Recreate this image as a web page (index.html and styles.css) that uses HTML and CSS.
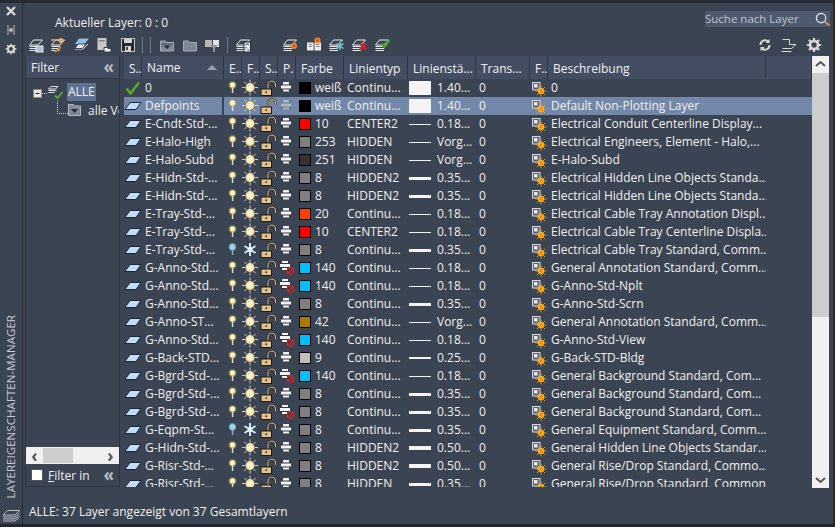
FILE: index.html
```html
<!DOCTYPE html>
<html lang="de">
<head>
<meta charset="utf-8">
<title>Layereigenschaften-Manager</title>
<link rel="stylesheet" href="styles.css">
</head>
<body>
<svg class="defs" aria-hidden="true">
  <symbol id="layer" viewBox="0 0 18 18"><path d="M6 5.500h11l-5 7H1z" fill="#c4dcf5" stroke="#16263f"/></symbol>
  <symbol id="check" viewBox="0 0 18 18"><path d="M2.500 9.500l4 5L15 3.500" fill="none" stroke="#5cab2e" stroke-width="2.400"/></symbol>
  <symbol id="bulb" viewBox="0 0 18 18"><circle cx="8.500" cy="6" r="4" fill="#b8a25a" opacity=".45"/><circle cx="8.500" cy="6" r="2.800" fill="#fff3b8"/><rect x="7.800" y="9" width="1.500" height="5" fill="#e4dcc0"/></symbol>
  <symbol id="bulboff" viewBox="0 0 18 18"><circle cx="8.500" cy="6" r="3.400" fill="#a4d4e6" stroke="#5f97ad"/><rect x="7.800" y="9" width="1.500" height="5" fill="#8fa7b5"/></symbol>
  <symbol id="sun" viewBox="0 0 18 18"><path d="M8 .5v16M0 8.500h16M2.400 2.900l11.200 11.200M13.600 2.900L2.400 14.100" stroke="#e2decd" stroke-width=".9"/><circle cx="8" cy="8.500" r="5" fill="#5a5d5c"/><circle cx="8" cy="8.500" r="4.400" fill="#f8e3a4"/><circle cx="8" cy="8.500" r="2.500" fill="#fff5d2"/></symbol>
  <symbol id="snow" viewBox="0 0 18 18"><path d="M8 2v13M2.500 5l11 7M13.500 5l-11 7" stroke="#cfe8f5" stroke-width="2"/><circle cx="8" cy="8.500" r="2.500" fill="#e6f5fb"/></symbol>
  <symbol id="lock" viewBox="0 0 18 18"><path d="M8 10V6a3.500 3.500 0 0 1 7.500-.500V8" fill="none" stroke="#15181c" stroke-width="2.200"/><path d="M8 10V6a3.500 3.500 0 0 1 7.500-.500V8" fill="none" stroke="#ecc98a" stroke-width="1.100"/><rect x="1" y="10" width="10.500" height="6.500" fill="#e6c180" stroke="#15181c"/><rect x="5.500" y="12.500" width="1.500" height="1.500" fill="#15181c"/></symbol>
  <symbol id="print" viewBox="0 0 18 18"><rect x="3" y="3" width="10" height="10" rx="2" fill="#262b33" opacity=".4"/><rect x="5" y="3" width="6" height="2.500" fill="#f4f4f4"/><rect x="3" y="6.500" width="10" height="3" fill="#f4f4f4"/><rect x="5" y="10.500" width="6" height="2" fill="#f4f4f4"/></symbol>
  <symbol id="noprint" viewBox="0 0 18 18"><rect x="2" y="2" width="10" height="10" rx="2" fill="#262b33" opacity=".4"/><rect x="4" y="2" width="6" height="2" fill="#f4f4f4"/><rect x="2" y="5" width="10" height="3" fill="#f4f4f4"/><rect x="4" y="9" width="5" height="2" fill="#f4f4f4"/><circle cx="12.500" cy="12" r="3.200" fill="none" stroke="#d8231f" stroke-width="1.300"/><path d="M10.300 14.300l4.500-4.600" stroke="#d8231f" stroke-width="1.100"/></symbol>
  <symbol id="vp" viewBox="0 0 18 18"><rect x="2.500" y="3.500" width="7.500" height="7.500" fill="#59626f" stroke="#d8d8d8"/><rect x="4" y="5" width="3.500" height="3.500" fill="#e8e8e8"/><path d="M11 6.500v11M5.500 12h11M7 8l8 8M15 8l-8 8" stroke="#f7a81b" stroke-width=".9"/><circle cx="11" cy="12" r="3" fill="#ffb820"/><circle cx="11" cy="12" r="1.400" fill="#f3731a"/></symbol>
  <symbol id="stack" viewBox="0 0 16 16"><path d="M5.500 3h9L10 8H1.500zM1.500 9.500h8.500M1.500 11.500h8.500M1.500 13.500h8.500" fill="none" stroke="#e8e8e8"/></symbol>
  <symbol id="stripstack" viewBox="0 0 18 12"><path d="M5.500.5h12L13 5H1zM1 7h12l4.500-4M1 9h12l4.500-4M1 11h12l4.500-4" fill="none" stroke="#c8ccd2" stroke-width=".9"/></symbol>
  <symbol id="gear" viewBox="0 0 18 18"><circle cx="9" cy="9" r="4.500" fill="none" stroke="#d8d8d8" stroke-width="3"/><path d="M9 1v16M1 9h16M3.300 3.300l11.400 11.400M14.700 3.300L3.300 14.700" stroke="#d8d8d8" stroke-width="2.500" stroke-dasharray="3.500 9.200"/></symbol>
  <symbol id="folder" viewBox="0 0 16 16"><path d="M1.500 4h5l1 1.500h7V14h-13z" fill="#7d8796" stroke="#a6acb5"/><path d="M2 6.500h12V8H2z" fill="#5b6575"/><path d="M4.500 8.500h7L8 12z" fill="#262b33"/></symbol>
</svg>
<div class="window">
  <aside class="strip">
    <div class="strip-top">
      <svg class="s-ic" viewBox="0 0 12 12"><path d="M2 2l8 8M10 2l-8 8" stroke="#d8d8d8" stroke-width="2.400"/></svg>
      <svg class="s-ic" viewBox="0 0 12 12"><path d="M3 1v10M9 1v10" stroke="#b8b8b8"/><path d="M3.500 6L6 3.500v5zM8.500 6L6 3.500v5z" fill="#b8b8b8"/></svg>
      <svg class="s-ic"><use href="#gear"/></svg>
    </div>
    <div class="strip-title">LAYEREIGENSCHAFTEN-MANAGER</div>
    <svg class="s-stack"><use href="#stripstack"/></svg>
  </aside>
  <main class="panel">
    <header class="top">
      <div class="current">Aktueller Layer: 0 : 0</div>
      <div class="search"><span>Suche nach Layer</span>
        <svg class="mag" viewBox="0 0 16 16"><circle cx="6.500" cy="6.500" r="5" fill="none" stroke="#e8e8e8" stroke-width="1.300"/><path d="M10.500 10.500l5 4" stroke="#cf9a52" stroke-width="2"/></svg>
      </div>
    </header>
    <div class="toolbar">
      <div class="tools">
        <svg class="t"><use href="#stack"/><rect x="8" y="9" width="7" height="6" fill="#a9c0d6" stroke="#e8e8e8"/></svg>
        <svg class="t"><use href="#stack"/><circle cx="11" cy="3.500" r="2.500" fill="#d9b26a"/><path d="M1 3h9" stroke="#d9b26a" stroke-width="1.500"/><path d="M5 15l6-5" stroke="#c9822c" stroke-width="2"/></svg>
        <svg class="t m2" viewBox="0 0 16 16"><path d="M5 1.500h10L10.500 7H1z" fill="#8fbfe6"/><path d="M1 12h8l5-5" fill="none" stroke="#e8e8e8"/><path d="M4 7h8l-3.500 4.500H1z" fill="#f0f0f0" stroke="#39424f"/></svg>
        <svg class="t" viewBox="0 0 16 16"><rect x="1.500" y="1" width="9" height="12" fill="#c8c8c8"/><rect x="3" y="3" width="6" height="1.500" fill="#7d8796"/><path d="M8 10.500h3l1 1h3V15H8z" fill="#eee" stroke="#39424f"/></svg>
        <svg class="t m2" viewBox="0 0 16 16"><rect x="1.500" y="1.500" width="13" height="13" fill="#262b33" stroke="#c4c4c4"/><rect x="4" y="2" width="8" height="4" fill="#d0d0d0"/><rect x="5" y="9" width="6" height="5" fill="#d8d8d8"/><rect x="6" y="10" width="2" height="3" fill="#39424f"/></svg>
        <i class="sep"></i><i class="sep m1"></i>
        <svg class="t m2"><use href="#folder"/></svg>
        <svg class="t m1" viewBox="0 0 16 16"><path d="M1.500 4h5l1 1.500h7V14h-13z" fill="#7d8796" stroke="#a6acb5"/></svg>
        <svg class="t" viewBox="0 0 16 16"><rect x="1" y="3" width="7" height="7" fill="#b8b8b8"/><rect x="9" y="3" width="6" height="7" fill="#e0e0e0"/><path d="M6 8h8l-3 3v4h-2v-4z" fill="#8e949c"/></svg>
        <i class="sep m1"></i>
        <svg class="t m1"><use href="#stack"/><rect x="9" y="5" width="6.500" height="10" fill="#f0f0f0" stroke="#262b33"/><rect x="10.500" y="6.500" width="3.500" height="1.500" fill="#3d7fc4"/><rect x="10.500" y="10" width="1.500" height="1.500" fill="#3d7fc4"/><rect x="12.500" y="12" width="1.500" height="1.500" fill="#3d7fc4"/></svg>
        <span class="tool-gap"></span>
        <svg class="t"><use href="#stack"/><circle cx="12" cy="9" r="3" fill="#f3881c"/><circle cx="12" cy="9" r="1.300" fill="#e63a1e"/></svg>
        <svg class="t m2" viewBox="0 0 16 16"><path d="M1 5.500h6.500v8H1zM8.500 5.500H15v8H8.500z" fill="#f0f0f0"/><path d="M2.500 7.500h3.500M2.500 9.500h3.500M10 7.500h3.500M10 9.500h3.500" stroke="#7d8796"/><circle cx="11.500" cy="3.500" r="3" fill="#f3881c"/><circle cx="11.500" cy="3.500" r="1.300" fill="#e63a1e"/></svg>
        <svg class="t"><use href="#stack"/><path d="M12 5v8M8.500 6.500l7 5M15.500 6.500l-7 5" stroke="#7cc0dc" stroke-width="1.500"/></svg>
        <svg class="t m1"><use href="#stack"/><path d="M9 6.500l6 6M15 6.500l-6 6" stroke="#e2202a" stroke-width="2.300"/></svg>
        <svg class="t m1"><use href="#stack"/><path d="M7.500 7l3 3 5-7" fill="none" stroke="#3faa1e" stroke-width="2.400"/></svg>
      </div>
      <div class="tools-right">
        <svg class="tr" viewBox="0 0 14 14"><path d="M2.500 7a4.500 4.500 0 0 1 8-3M11.500 7a4.500 4.500 0 0 1-8 3" fill="none" stroke="#d8d8d8" stroke-width="2"/><path d="M11.500 1v4h-4zM2.500 13V9h4z" fill="#d8d8d8"/></svg>
        <svg class="tr2" viewBox="0 0 16 14"><path d="M1.500 1.500h7v5h6.500l-4.500 4h-9" fill="none" stroke="#d8d8d8"/><path d="M.5 13.500h10" stroke="#d8d8d8"/></svg>
        <svg class="tr2"><use href="#gear"/></svg>
      </div>
    </div>
    <div class="content">
      <section class="filter">
        <div class="filter-head"><span>Filter</span><span class="chev">«</span></div>
        <div class="tree">
          <div class="node">
            <svg class="tree-ic" viewBox="0 0 34 18"><rect x=".5" y="6.500" width="8" height="8" fill="#e6e6e6" stroke="#8a8a8a"/><path d="M2.500 10.500h4" stroke="#222"/><path d="M9 10.500h6" stroke="#d0d0d0" stroke-dasharray="1 1"/><path d="M18 3.500h7l-2.500 2.500H15.500zM15.500 7.500h8M15.500 9.500h6" fill="none" stroke="#e4e4e4"/><path d="M22 12.500l2.500 2.500 5-6" fill="none" stroke="#5cab2e" stroke-width="1.800"/></svg>
            <span class="all">ALLE</span>
          </div>
          <div class="node node-sub">
            <svg class="sub-ic" viewBox="0 0 32 18"><path d="M1.500 0v12.500H12" fill="none" stroke="#d0d0d0" stroke-dasharray="1 1"/><path d="M12.500 3.500h5l1 1.500h6v9.500h-12z" fill="#7d8796" stroke="#b4b9c0"/><path d="M15 8h7l-3.500 4z" fill="#262b33"/></svg>
            <span>alle Ve</span>
          </div>
        </div>
        <div class="hbar"><span class="arrow">‹</span><span class="hthumb"></span><span class="arrow arrow-r">›</span></div>
        <div class="filter-foot"><label class="inv"><i class="box"></i><span><u>F</u>ilter in</span></label><span class="chev">«</span></div>
      </section>
      <section class="table">
        <div class="list">
          <div class="row head">
            <div>S..</div><div class="namehead">Name<i class="sort"></i></div><div>E..</div><div>F..</div><div>S..</div><div>P.</div><div>Farbe</div><div>Linientyp</div><div>Linienstä...</div><div>Trans...</div><div>F..</div><div>Beschreibung</div><div></div>
          </div>
          <div class="rows">
            <div class="row"><div class="ic"><svg><use href="#check"/></svg></div><div class="nm">0</div><div class="ic"><svg><use href="#bulb"/></svg></div><div class="ic"><svg><use href="#sun"/></svg></div><div class="ic"><svg><use href="#lock"/></svg></div><div class="ic"><svg><use href="#print"/></svg></div><div class="col"><i class="sw c-k"></i>weiß</div><div class="tx">Continu...</div><div class="lw"><i class="ln w-fat"></i>1.40...</div><div class="tx">0</div><div class="ic"><svg><use href="#vp"/></svg></div><div class="tx">0</div><div></div></div>
            <div class="row sel"><div class="ic"><svg><use href="#layer"/></svg></div><div class="nm">Defpoints</div><div class="ic"><svg><use href="#bulb"/></svg></div><div class="ic"><svg><use href="#sun"/></svg></div><div class="ic"><svg><use href="#lock"/></svg></div><div class="ic dim"><svg><use href="#print"/></svg></div><div class="col"><i class="sw c-k"></i>weiß</div><div class="tx">Continu...</div><div class="lw"><i class="ln w-fat"></i>1.40...</div><div class="tx">0</div><div class="ic"><svg><use href="#vp"/></svg></div><div class="tx">Default Non-Plotting Layer</div><div></div></div>
            <div class="row"><div class="ic"><svg><use href="#layer"/></svg></div><div class="nm">E-Cndt-Std-...</div><div class="ic"><svg><use href="#bulb"/></svg></div><div class="ic"><svg><use href="#sun"/></svg></div><div class="ic"><svg><use href="#lock"/></svg></div><div class="ic"><svg><use href="#print"/></svg></div><div class="col"><i class="sw c-r"></i>10</div><div class="tx">CENTER2</div><div class="lw"><i class="ln w1"></i>0.18...</div><div class="tx">0</div><div class="ic"><svg><use href="#vp"/></svg></div><div class="tx">Electrical Conduit Centerline Display...</div><div></div></div>
            <div class="row"><div class="ic"><svg><use href="#layer"/></svg></div><div class="nm">E-Halo-High</div><div class="ic"><svg><use href="#bulb"/></svg></div><div class="ic"><svg><use href="#sun"/></svg></div><div class="ic"><svg><use href="#lock"/></svg></div><div class="ic"><svg><use href="#print"/></svg></div><div class="col"><i class="sw c-253"></i>253</div><div class="tx">HIDDEN</div><div class="lw"><i class="ln w1"></i>Vorg...</div><div class="tx">0</div><div class="ic"><svg><use href="#vp"/></svg></div><div class="tx">Electrical Engineers, Element - Halo,...</div><div></div></div>
            <div class="row"><div class="ic"><svg><use href="#layer"/></svg></div><div class="nm">E-Halo-Subd</div><div class="ic"><svg><use href="#bulb"/></svg></div><div class="ic"><svg><use href="#sun"/></svg></div><div class="ic"><svg><use href="#lock"/></svg></div><div class="ic"><svg><use href="#print"/></svg></div><div class="col"><i class="sw c-251"></i>251</div><div class="tx">HIDDEN</div><div class="lw"><i class="ln w1"></i>Vorg...</div><div class="tx">0</div><div class="ic"><svg><use href="#vp"/></svg></div><div class="tx">E-Halo-Subd</div><div></div></div>
            <div class="row"><div class="ic"><svg><use href="#layer"/></svg></div><div class="nm">E-Hidn-Std-...</div><div class="ic"><svg><use href="#bulb"/></svg></div><div class="ic"><svg><use href="#sun"/></svg></div><div class="ic"><svg><use href="#lock"/></svg></div><div class="ic"><svg><use href="#print"/></svg></div><div class="col"><i class="sw c-8"></i>8</div><div class="tx">HIDDEN2</div><div class="lw"><i class="ln w2"></i>0.35...</div><div class="tx">0</div><div class="ic"><svg><use href="#vp"/></svg></div><div class="tx">Electrical Hidden Line Objects Standa...</div><div></div></div>
            <div class="row"><div class="ic"><svg><use href="#layer"/></svg></div><div class="nm">E-Hidn-Std-...</div><div class="ic"><svg><use href="#bulb"/></svg></div><div class="ic"><svg><use href="#sun"/></svg></div><div class="ic"><svg><use href="#lock"/></svg></div><div class="ic"><svg><use href="#print"/></svg></div><div class="col"><i class="sw c-8"></i>8</div><div class="tx">HIDDEN2</div><div class="lw"><i class="ln w2"></i>0.35...</div><div class="tx">0</div><div class="ic"><svg><use href="#vp"/></svg></div><div class="tx">Electrical Hidden Line Objects Standa...</div><div></div></div>
            <div class="row"><div class="ic"><svg><use href="#layer"/></svg></div><div class="nm">E-Tray-Std-...</div><div class="ic"><svg><use href="#bulb"/></svg></div><div class="ic"><svg><use href="#sun"/></svg></div><div class="ic"><svg><use href="#lock"/></svg></div><div class="ic"><svg><use href="#print"/></svg></div><div class="col"><i class="sw c-20"></i>20</div><div class="tx">Continu...</div><div class="lw"><i class="ln w1"></i>0.18...</div><div class="tx">0</div><div class="ic"><svg><use href="#vp"/></svg></div><div class="tx">Electrical Cable Tray Annotation Displ...</div><div></div></div>
            <div class="row"><div class="ic"><svg><use href="#layer"/></svg></div><div class="nm">E-Tray-Std-...</div><div class="ic"><svg><use href="#bulb"/></svg></div><div class="ic"><svg><use href="#sun"/></svg></div><div class="ic"><svg><use href="#lock"/></svg></div><div class="ic"><svg><use href="#print"/></svg></div><div class="col"><i class="sw c-r"></i>10</div><div class="tx">CENTER2</div><div class="lw"><i class="ln w1"></i>0.18...</div><div class="tx">0</div><div class="ic"><svg><use href="#vp"/></svg></div><div class="tx">Electrical Cable Tray Centerline Displa...</div><div></div></div>
            <div class="row"><div class="ic"><svg><use href="#layer"/></svg></div><div class="nm">E-Tray-Std-...</div><div class="ic"><svg><use href="#bulboff"/></svg></div><div class="ic"><svg><use href="#snow"/></svg></div><div class="ic"><svg><use href="#lock"/></svg></div><div class="ic"><svg><use href="#print"/></svg></div><div class="col"><i class="sw c-8"></i>8</div><div class="tx">Continu...</div><div class="lw"><i class="ln w2"></i>0.35...</div><div class="tx">0</div><div class="ic"><svg><use href="#vp"/></svg></div><div class="tx">Electrical Cable Tray Standard, Comm...</div><div></div></div>
            <div class="row"><div class="ic"><svg><use href="#layer"/></svg></div><div class="nm">G-Anno-Std...</div><div class="ic"><svg><use href="#bulb"/></svg></div><div class="ic"><svg><use href="#sun"/></svg></div><div class="ic"><svg><use href="#lock"/></svg></div><div class="ic"><svg><use href="#noprint"/></svg></div><div class="col"><i class="sw c-140"></i>140</div><div class="tx">Continu...</div><div class="lw"><i class="ln w1"></i>0.18...</div><div class="tx">0</div><div class="ic"><svg><use href="#vp"/></svg></div><div class="tx">General Annotation Standard, Comm...</div><div></div></div>
            <div class="row"><div class="ic"><svg><use href="#layer"/></svg></div><div class="nm">G-Anno-Std...</div><div class="ic"><svg><use href="#bulb"/></svg></div><div class="ic"><svg><use href="#sun"/></svg></div><div class="ic"><svg><use href="#lock"/></svg></div><div class="ic"><svg><use href="#noprint"/></svg></div><div class="col"><i class="sw c-140"></i>140</div><div class="tx">Continu...</div><div class="lw"><i class="ln w1"></i>0.18...</div><div class="tx">0</div><div class="ic"><svg><use href="#vp"/></svg></div><div class="tx">G-Anno-Std-Nplt</div><div></div></div>
            <div class="row"><div class="ic"><svg><use href="#layer"/></svg></div><div class="nm">G-Anno-Std...</div><div class="ic"><svg><use href="#bulb"/></svg></div><div class="ic"><svg><use href="#sun"/></svg></div><div class="ic"><svg><use href="#lock"/></svg></div><div class="ic"><svg><use href="#print"/></svg></div><div class="col"><i class="sw c-8"></i>8</div><div class="tx">Continu...</div><div class="lw"><i class="ln w2"></i>0.35...</div><div class="tx">0</div><div class="ic"><svg><use href="#vp"/></svg></div><div class="tx">G-Anno-Std-Scrn</div><div></div></div>
            <div class="row"><div class="ic"><svg><use href="#layer"/></svg></div><div class="nm">G-Anno-ST...</div><div class="ic"><svg><use href="#bulb"/></svg></div><div class="ic"><svg><use href="#sun"/></svg></div><div class="ic"><svg><use href="#lock"/></svg></div><div class="ic"><svg><use href="#print"/></svg></div><div class="col"><i class="sw c-42"></i>42</div><div class="tx">Continu...</div><div class="lw"><i class="ln w1"></i>Vorg...</div><div class="tx">0</div><div class="ic"><svg><use href="#vp"/></svg></div><div class="tx">General Annotation Standard, Comm...</div><div></div></div>
            <div class="row"><div class="ic"><svg><use href="#layer"/></svg></div><div class="nm">G-Anno-Std...</div><div class="ic"><svg><use href="#bulb"/></svg></div><div class="ic"><svg><use href="#sun"/></svg></div><div class="ic"><svg><use href="#lock"/></svg></div><div class="ic"><svg><use href="#noprint"/></svg></div><div class="col"><i class="sw c-140"></i>140</div><div class="tx">Continu...</div><div class="lw"><i class="ln w1"></i>0.18...</div><div class="tx">0</div><div class="ic"><svg><use href="#vp"/></svg></div><div class="tx">G-Anno-Std-View</div><div></div></div>
            <div class="row"><div class="ic"><svg><use href="#layer"/></svg></div><div class="nm">G-Back-STD...</div><div class="ic"><svg><use href="#bulb"/></svg></div><div class="ic"><svg><use href="#sun"/></svg></div><div class="ic"><svg><use href="#lock"/></svg></div><div class="ic"><svg><use href="#print"/></svg></div><div class="col"><i class="sw c-9"></i>9</div><div class="tx">Continu...</div><div class="lw"><i class="ln w15"></i>0.25...</div><div class="tx">0</div><div class="ic"><svg><use href="#vp"/></svg></div><div class="tx">G-Back-STD-Bldg</div><div></div></div>
            <div class="row"><div class="ic"><svg><use href="#layer"/></svg></div><div class="nm">G-Bgrd-Std-...</div><div class="ic"><svg><use href="#bulb"/></svg></div><div class="ic"><svg><use href="#sun"/></svg></div><div class="ic"><svg><use href="#lock"/></svg></div><div class="ic"><svg><use href="#noprint"/></svg></div><div class="col"><i class="sw c-140"></i>140</div><div class="tx">Continu...</div><div class="lw"><i class="ln w1"></i>0.18...</div><div class="tx">0</div><div class="ic"><svg><use href="#vp"/></svg></div><div class="tx">General Background Standard, Com...</div><div></div></div>
            <div class="row"><div class="ic"><svg><use href="#layer"/></svg></div><div class="nm">G-Bgrd-Std-...</div><div class="ic"><svg><use href="#bulb"/></svg></div><div class="ic"><svg><use href="#sun"/></svg></div><div class="ic"><svg><use href="#lock"/></svg></div><div class="ic"><svg><use href="#print"/></svg></div><div class="col"><i class="sw c-8"></i>8</div><div class="tx">Continu...</div><div class="lw"><i class="ln w2"></i>0.35...</div><div class="tx">0</div><div class="ic"><svg><use href="#vp"/></svg></div><div class="tx">General Background Standard, Com...</div><div></div></div>
            <div class="row"><div class="ic"><svg><use href="#layer"/></svg></div><div class="nm">G-Bgrd-Std-...</div><div class="ic"><svg><use href="#bulb"/></svg></div><div class="ic"><svg><use href="#sun"/></svg></div><div class="ic"><svg><use href="#lock"/></svg></div><div class="ic"><svg><use href="#noprint"/></svg></div><div class="col"><i class="sw c-8"></i>8</div><div class="tx">Continu...</div><div class="lw"><i class="ln w2"></i>0.35...</div><div class="tx">0</div><div class="ic"><svg><use href="#vp"/></svg></div><div class="tx">General Background Standard, Com...</div><div></div></div>
            <div class="row"><div class="ic"><svg><use href="#layer"/></svg></div><div class="nm">G-Eqpm-St...</div><div class="ic"><svg><use href="#bulboff"/></svg></div><div class="ic"><svg><use href="#snow"/></svg></div><div class="ic"><svg><use href="#lock"/></svg></div><div class="ic"><svg><use href="#print"/></svg></div><div class="col"><i class="sw c-8"></i>8</div><div class="tx">Continu...</div><div class="lw"><i class="ln w2"></i>0.35...</div><div class="tx">0</div><div class="ic"><svg><use href="#vp"/></svg></div><div class="tx">General Equipment Standard, Comm...</div><div></div></div>
            <div class="row"><div class="ic"><svg><use href="#layer"/></svg></div><div class="nm">G-Hidn-Std-...</div><div class="ic"><svg><use href="#bulb"/></svg></div><div class="ic"><svg><use href="#sun"/></svg></div><div class="ic"><svg><use href="#lock"/></svg></div><div class="ic"><svg><use href="#print"/></svg></div><div class="col"><i class="sw c-8"></i>8</div><div class="tx">HIDDEN2</div><div class="lw"><i class="ln w3"></i>0.50...</div><div class="tx">0</div><div class="ic"><svg><use href="#vp"/></svg></div><div class="tx">General Hidden Line Objects Standar...</div><div></div></div>
            <div class="row"><div class="ic"><svg><use href="#layer"/></svg></div><div class="nm">G-Risr-Std-...</div><div class="ic"><svg><use href="#bulb"/></svg></div><div class="ic"><svg><use href="#sun"/></svg></div><div class="ic"><svg><use href="#lock"/></svg></div><div class="ic"><svg><use href="#print"/></svg></div><div class="col"><i class="sw c-8"></i>8</div><div class="tx">HIDDEN2</div><div class="lw"><i class="ln w3"></i>0.50...</div><div class="tx">0</div><div class="ic"><svg><use href="#vp"/></svg></div><div class="tx">General Rise/Drop Standard, Commo...</div><div></div></div>
            <div class="row"><div class="ic"><svg><use href="#layer"/></svg></div><div class="nm">G-Risr-Std-...</div><div class="ic"><svg><use href="#bulb"/></svg></div><div class="ic"><svg><use href="#sun"/></svg></div><div class="ic"><svg><use href="#lock"/></svg></div><div class="ic"><svg><use href="#print"/></svg></div><div class="col"><i class="sw c-8"></i>8</div><div class="tx">HIDDEN</div><div class="lw"><i class="ln w2"></i>0.35...</div><div class="tx">0</div><div class="ic"><svg><use href="#vp"/></svg></div><div class="tx">General Rise/Drop Standard, Common</div><div></div></div>
          </div>
        </div>
        <div class="vbar">
          <svg class="vbtn" viewBox="0 0 17 17"><path d="M4 10l4.500-4 4.500 4" fill="none" stroke="#555" stroke-width="2"/></svg>
          <div class="vthumb"></div>
          <div class="vtrack"></div>
          <svg class="vbtn" viewBox="0 0 17 17"><path d="M4 7l4.500 4 4.500-4" fill="none" stroke="#555" stroke-width="2"/></svg>
        </div>
      </section>
    </div>
    <footer class="status">ALLE: 37 Layer angezeigt von 37 Gesamtlayern</footer>
  </main>
</div>
</body>
</html>
```

FILE: styles.css
```css
html, body { margin: 0; padding: 0; background: #23282f; }
body { width: 835px; height: 527px; overflow: hidden; font-family: "Open Sans", "Noto Sans", sans-serif; font-size: 12px; color: #f0f0f0; }
.defs { position: absolute; width: 0; height: 0; }
.window { display: flex; width: 833px; height: 524px; box-sizing: border-box; padding-top: 3px; background: #262b33; }
.strip { width: 22px; flex: none; display: flex; flex-direction: column; align-items: center; background: #3b4453; }
.strip-top { display: flex; flex-direction: column; align-items: center; gap: 7px; padding-top: 2px; }
.s-ic { width: 12px; height: 12px; }
.strip-title { margin-top: auto; writing-mode: vertical-rl; transform: rotate(180deg); font-size: 11.600px; color: #c8ccd2; line-height: 14px; white-space: nowrap; }
.s-stack { width: 18px; height: 12px; margin: 12px 0 2px; flex: none; }
.panel { flex: 1; margin-left: 1px; min-width: 0; display: flex; flex-direction: column; background: #3b4453; border-radius: 3px 0 0 0; }
.top { height: 30px; display: flex; justify-content: space-between; align-items: flex-start; padding: 8px 3px 0 32px; box-sizing: border-box; }
.current { font-size: 12px; line-height: 16px; padding-top: 4px; }
.search { width: 125px; height: 16px; background: #4d596c; display: flex; justify-content: space-between; align-items: center; box-sizing: border-box; color: #c0c5cc; font-size: 11.500px; line-height: 16px; }
.mag { width: 15px; height: 15px; }
.toolbar { height: 23px; display: flex; justify-content: space-between; align-items: center; padding: 0 11px 0 5px; }
.tools { display: flex; align-items: center; gap: 6px; }
.t { width: 16px; height: 16px; flex: none; }
.m1 { margin-left: 1px; }
.m2 { margin-left: 2px; }
.sep { width: 1px; height: 16px; background: #6f7886; flex: none; }
.tool-gap { width: 19px; }
.tools-right { display: flex; align-items: center; gap: 9px; }
.tr { width: 14px; height: 14px; }
.tr2 { width: 16px; height: 16px; }
.content { display: flex; height: 432px; flex: none; }
.filter { width: 95px; height: 431px; margin-left: 2px; box-sizing: border-box; border: 1px solid #2e3541; border-top: 0; display: flex; flex-direction: column; flex: none; }
.filter-head { height: 22px; flex: none; background: #444e62; display: flex; justify-content: space-between; align-items: center; padding: 0 5px; border-bottom: 1px solid #2e3541; }
.chev { font-size: 17px; line-height: 16px; color: #b9bec6; font-weight: 700; }
.tree { flex: 1; padding-top: 4px; overflow: hidden; }
.node { display: flex; align-items: center; height: 18px; padding-left: 7px; white-space: nowrap; }
.tree-ic { width: 34px; height: 18px; flex: none; }
.all { background: #5f7291; padding: 0 1px; width: 29px; box-sizing: border-box; height: 18px; line-height: 18px; }
.node-sub { padding-left: 30px; }
.sub-ic { width: 32px; height: 18px; flex: none; }
.hbar { height: 17px; flex: none; background: #f0f0f0; display: flex; align-items: center; color: #555; }
.arrow { width: 17px; text-align: center; font-size: 17px; font-weight: 700; line-height: 15px; }
.arrow-r { margin-left: auto; }
.hthumb { width: 30px; height: 15px; background: #cdcdcd; }
.filter-foot { height: 22px; flex: none; display: flex; align-items: center; justify-content: space-between; padding: 0 5px; }
.inv { display: flex; align-items: center; gap: 5px; }
.box { width: 12px; height: 12px; background: #fff; border: 1px solid #555; box-sizing: border-box; }
.table { margin-left: 4px; width: 706px; display: flex; flex: none; }
.list { width: 688px; flex: none; height: 431px; overflow: hidden; }
.rows { height: 408px; overflow: hidden; }
.row { display: grid; grid-template-columns: 18px 82px 18px 18px 18px 18px 48px 64px 68px 54px 18px 218px 46px; height: 18px; line-height: 18px; white-space: nowrap; }
.row > div { overflow: hidden; }
.head { height: 23px; line-height: 25px; }
.head > div { background: #444e62; padding-left: 5px; box-sizing: border-box; border-right: 1px solid #2e3541; }
.namehead { display: flex; justify-content: space-between; align-items: center; padding-right: 6px; }
.sort { width: 0; height: 0; border: 5px solid transparent; border-top: 0; border-bottom: 5px solid #9aa0aa; }
.ic { display: flex; align-items: center; justify-content: center; }
.ic svg { width: 18px; height: 18px; flex: none; }
.nm { padding-left: 3px; border-right: 2px solid #3b4453; }
.tx { padding-left: 3px; }
.col { display: flex; align-items: center; gap: 4px; padding-left: 3px; }
.sw { width: 12px; height: 12px; outline: 1px solid #000; outline-offset: -1px; flex: none; }
.c-k { background: #000; }
.c-r { background: #ff0000; }
.c-253 { background: #808080; }
.c-251 { background: #333333; }
.c-8 { background: #808080; }
.c-9 { background: #c0c0c0; }
.c-20 { background: #ff3f00; }
.c-140 { background: #00bfff; }
.c-42 { background: #a57c00; }
.lw { display: flex; align-items: center; gap: 6px; padding-left: 1px; }
.ln { width: 22px; background: #f4f4f4; flex: none; }
.w1 { height: 1px; }
.w15 { height: 2px; }
.w2 { height: 3px; }
.w3 { height: 4px; }
.w-fat { height: 14px; }
.sel { background: #7388a8; }
.dim svg { opacity: .45; }
.vbar { width: 17px; flex: none; height: 432px; display: flex; flex-direction: column; background: #f0f0f0; }
.vbtn { width: 17px; height: 17px; flex: none; }
.vthumb { height: 244px; flex: none; background: #cdcdcd; }
.vtrack { flex: 1; }
.status { flex: 1; padding: 16px 0 0 6px; line-height: 16px; }
```
